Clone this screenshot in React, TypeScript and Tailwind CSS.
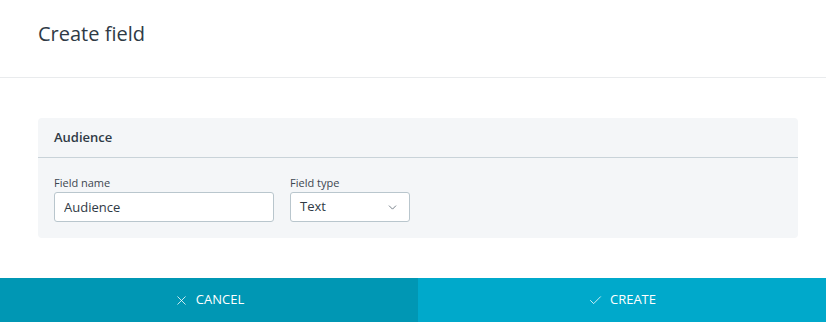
import { ChevronDown, X, Check } from 'lucide-react';

export default function App() {
  return (
    <div className="w-[826px] h-[322px] bg-white flex flex-col text-[#333b44] font-['Open_Sans',sans-serif]">
      <div className="h-[78px] border-b border-[#e9ebed] px-[38px] pt-[21px]">
        <h1 className="text-[20px] leading-[26px] text-[#2f3a45]">Create field</h1>
      </div>

      <div className="flex-1 pl-[38px] pt-[40px]">
        <div className="w-[760px] rounded-[4px] bg-[#f4f6f8]">
          <div className="h-[40px] border-b border-[#c9d3d9] px-4 flex items-center">
            <span className="text-[13px] font-semibold text-[#2f3a45]">Audience</span>
          </div>
          <div className="flex gap-4 px-4 pt-[18px] pb-4">
            <label className="block">
              <span className="block text-[11px] leading-[14px] mb-[2px] text-[#3d4650]">Field name</span>
              <input
                type="text"
                defaultValue="Audience"
                className="w-[220px] h-[30px] rounded-[3px] border border-[#b9c6cd] bg-white px-[9px] text-[13px] text-[#2f3a45] outline-none"
              />
            </label>
            <label className="block">
              <span className="block text-[11px] leading-[14px] mb-[2px] text-[#3d4650]">Field type</span>
              <div className="w-[120px] h-[30px] rounded-[3px] border border-[#b9c6cd] bg-white pl-[9px] pr-[10px] flex items-center justify-between text-[13px] text-[#2f3a45]">
                <span>Text</span>
                <ChevronDown size={13} strokeWidth={1.5} className="text-[#5a6570]" />
              </div>
            </label>
          </div>
        </div>
      </div>

      <div className="h-[44px] flex text-white text-[13px]">
        <button className="w-[418px] bg-[#0097b4] flex items-center justify-center gap-[7px]">
          <X size={15} strokeWidth={1.25} />
          <span className="uppercase">Cancel</span>
        </button>
        <button className="flex-1 bg-[#00a9cb] flex items-center justify-center gap-[7px]">
          <Check size={15} strokeWidth={1.25} />
          <span className="uppercase">Create</span>
        </button>
      </div>
    </div>
  );
}
